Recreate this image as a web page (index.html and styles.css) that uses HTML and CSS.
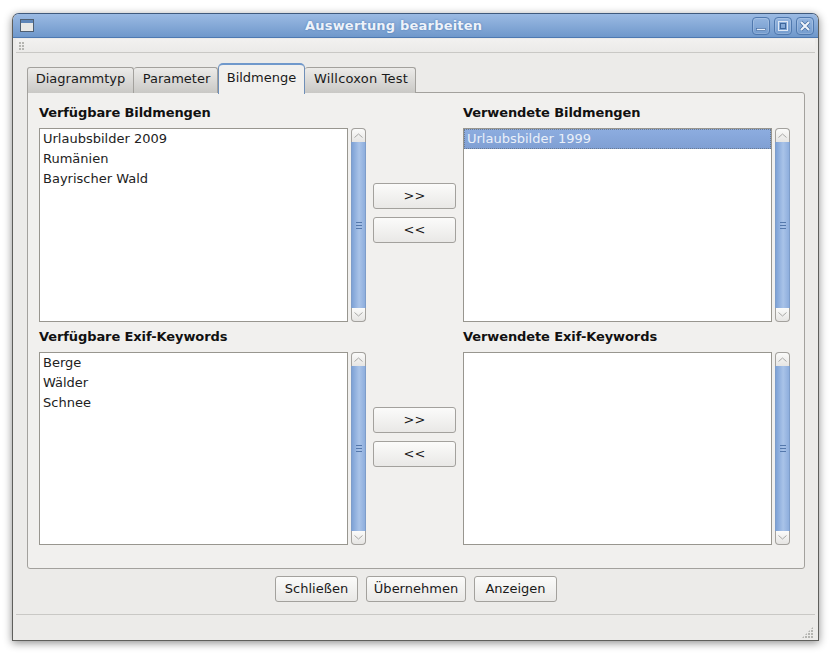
FILE: index.html
```html
<!DOCTYPE html>
<html lang="de">
<head>
<meta charset="utf-8">
<title>Auswertung bearbeiten</title>
<link rel="stylesheet" href="styles.css">
</head>
<body>
<div class="window">
  <header class="titlebar">
    <svg class="app-icon" width="15" height="15" viewBox="0 0 15 15"><rect x="0.5" y="0.5" width="13" height="12" fill="#e8e8e6" stroke="#4f5f72"/><rect x="1" y="1" width="12" height="3" fill="#5f86b8"/></svg>
    <span class="title">Auswertung bearbeiten</span>
    <div class="wm-buttons">
      <div class="wm-btn"><svg width="18" height="18" viewBox="0 0 18 18"><rect x="4.5" y="11.5" width="9" height="2" fill="#e6edf7" stroke="#3f679c" stroke-width=".6"/></svg></div>
      <div class="wm-btn"><svg width="18" height="18" viewBox="0 0 18 18"><rect x="4.5" y="4.5" width="9" height="9" fill="none" stroke="#dfe8f5" stroke-width="1"/><rect x="6.5" y="6.5" width="5" height="5" fill="none" stroke="#3f679c"/></svg></div>
      <div class="wm-btn"><svg width="18" height="18" viewBox="0 0 18 18"><path d="M5 5l8 8M13 5l-8 8" stroke="#3f679c" stroke-width="3.4" fill="none"/><path d="M5 5l8 8M13 5l-8 8" stroke="#eef3fa" stroke-width="2.2" fill="none"/></svg></div>
    </div>
  </header>
  <div class="toolbar"><span class="grip"></span></div>
  <main class="content">
    <nav class="tabs">
      <div class="tab t1">Diagrammtyp</div>
      <div class="tab t2">Parameter</div>
      <div class="tab tab-active">Bildmenge</div>
      <div class="tab t4">Willcoxon Test</div>
    </nav>
    <section class="pane">
      <div class="transfer">
        <div class="side">
          <h2 class="label">Verfügbare Bildmengen</h2>
          <div class="list-row">
            <ul class="list"><li>Urlaubsbilder 2009</li><li>Rumänien</li><li>Bayrischer Wald</li></ul>
            <div class="scrollbar"><div class="arrow up"><svg width="9" height="5" viewBox="0 0 9 5"><path d="M.5 4.5l4-3.5 4 3.5" fill="none" stroke="#a8a8a6"/></svg></div><div class="thumb"><span class="thumb-grip"></span></div><div class="arrow down"><svg width="9" height="5" viewBox="0 0 9 5"><path d="M.5 .5l4 3.5 4-3.5" fill="none" stroke="#a8a8a6"/></svg></div></div>
          </div>
        </div>
        <div class="moves"><button class="btn move">&gt;&gt;</button><button class="btn move">&lt;&lt;</button></div>
        <div class="side">
          <h2 class="label">Verwendete Bildmengen</h2>
          <div class="list-row">
            <ul class="list"><li class="selected">Urlaubsbilder 1999</li></ul>
            <div class="scrollbar"><div class="arrow up"><svg width="9" height="5" viewBox="0 0 9 5"><path d="M.5 4.5l4-3.5 4 3.5" fill="none" stroke="#a8a8a6"/></svg></div><div class="thumb"><span class="thumb-grip"></span></div><div class="arrow down"><svg width="9" height="5" viewBox="0 0 9 5"><path d="M.5 .5l4 3.5 4-3.5" fill="none" stroke="#a8a8a6"/></svg></div></div>
          </div>
        </div>
      </div>
      <div class="transfer">
        <div class="side">
          <h2 class="label">Verfügbare Exif-Keywords</h2>
          <div class="list-row">
            <ul class="list"><li>Berge</li><li>Wälder</li><li>Schnee</li></ul>
            <div class="scrollbar"><div class="arrow up"><svg width="9" height="5" viewBox="0 0 9 5"><path d="M.5 4.5l4-3.5 4 3.5" fill="none" stroke="#a8a8a6"/></svg></div><div class="thumb"><span class="thumb-grip"></span></div><div class="arrow down"><svg width="9" height="5" viewBox="0 0 9 5"><path d="M.5 .5l4 3.5 4-3.5" fill="none" stroke="#a8a8a6"/></svg></div></div>
          </div>
        </div>
        <div class="moves"><button class="btn move">&gt;&gt;</button><button class="btn move">&lt;&lt;</button></div>
        <div class="side">
          <h2 class="label">Verwendete Exif-Keywords</h2>
          <div class="list-row">
            <ul class="list"></ul>
            <div class="scrollbar"><div class="arrow up"><svg width="9" height="5" viewBox="0 0 9 5"><path d="M.5 4.5l4-3.5 4 3.5" fill="none" stroke="#a8a8a6"/></svg></div><div class="thumb"><span class="thumb-grip"></span></div><div class="arrow down"><svg width="9" height="5" viewBox="0 0 9 5"><path d="M.5 .5l4 3.5 4-3.5" fill="none" stroke="#a8a8a6"/></svg></div></div>
          </div>
        </div>
      </div>
    </section>
    <div class="actions">
      <button class="btn action a1">Schließen</button>
      <button class="btn action a2">Übernehmen</button>
      <button class="btn action a3">Anzeigen</button>
    </div>
  </main>
  <footer class="statusbar"><span class="size-grip"></span></footer>
</div>
</body>
</html>
```
FILE: styles.css
```css
* { box-sizing: border-box; }
html, body { margin: 0; padding: 0; background: #fff; }
body {
  width: 833px;
  height: 653px;
  padding: 13px 14px 0 12px;
  font-family: "DejaVu Sans", sans-serif;
  font-size: 13px;
  color: #1a1a1a;
  overflow: hidden;
}
.window {
  width: 807px;
  height: 628px;
  background: #ecebe9;
  border: 1px solid #5f5f5c;
  border-top-color: #3f5a7d;
  border-radius: 7px 7px 0 0;
  box-shadow: 0 2px 8px rgba(0,0,0,.45);
  display: flex;
  flex-direction: column;
}
.titlebar {
  height: 24px;
  flex: none;
  background: linear-gradient(#9bbae3, #6f98cb);
  border-bottom: 1px solid #4e79b1;
  border-radius: 6px 6px 0 0;
  display: flex;
  align-items: center;
  padding: 0 4px 0 7px;
  position: relative;
}
.app-icon { flex: none; margin-top: 1px; }
.title {
  position: absolute;
  left: 292px;
  top: 4px;
  font-weight: bold;
  font-size: 13px;
  line-height: 15px;
  letter-spacing: .2px;
  color: #eef3fa;
  text-shadow: 0 0 2px #4e79b1;
}
.wm-buttons { margin-left: auto; display: flex; gap: 4px; }
.wm-btn {
  width: 18px;
  height: 18px;
  border: 1px solid #4f78ae;
  border-radius: 4px;
  box-shadow: inset 0 0 0 1px rgba(255,255,255,.18);
  display: flex;
  align-items: center;
  justify-content: center;
}
.wm-btn svg { margin: -1px; flex: none; }
.toolbar {
  height: 14px;
  flex: none;
  margin: 1px 3px 0;
  background: linear-gradient(#f2f1f0, #ebeae8);
  border-bottom: 1px solid #c9c8c5;
  padding: 3px 0 0 3px;
}
.grip {
  display: block;
  width: 5px;
  height: 8px;
  background-image: radial-gradient(circle at 1px 1px, #b5b5b1 1px, transparent 1px);
  background-size: 3px 3px;
}
.content {
  flex: 1;
  padding: 13px 13px 0 14px;
  display: flex;
  flex-direction: column;
}
.tabs {
  display: flex;
  height: 27px;
  align-items: flex-end;
  margin-bottom: -1px;
  position: relative;
  z-index: 1;
}
.tab {
  height: 26px;
  padding-top: 3px;
  line-height: 15px;
  text-align: center;
  background: linear-gradient(#ecebe9, #c9c8c5);
  border: 1px solid #a3a19d;
  border-bottom: 0;
  border-left-width: 0;
  border-radius: 3px 3px 0 0;
  white-space: nowrap;
}
.t1 { width: 107px; border-left-width: 1px; }
.t2 { width: 84px; padding-left: 2px; }
.t4 { width: 111px; padding-left: 2px; letter-spacing: .2px; }
.tab-active {
  width: 87px;
  height: 31px;
  padding-top: 5px;
  background: #f1f0ee;
  border: 1px solid #6f8fb8;
  border-top: 2px solid #6f98cb;
  border-bottom: 0;
  border-radius: 5px 5px 0 0;
  margin-bottom: -1px;
}
.pane {
  height: 477px;
  background: #f1f0ee;
  border: 1px solid #a3a19d;
  border-radius: 0 3px 3px 3px;
  padding: 12px 14px 0 11px;
  display: flex;
  flex-direction: column;
  gap: 7px;
}
.transfer { display: flex; }
.transfer:first-child .list-row { height: 194px; }
.transfer:last-child .list-row { height: 193px; }
.side { width: 327px; flex: none; }
.label {
  margin: 0 0 7px;
  font-size: 13px;
  font-weight: bold;
  line-height: 16px;
  letter-spacing: -.1px;
  color: #111;
}
.list-row { display: flex; gap: 3px; }
.list {
  flex: 1;
  margin: 0;
  padding: 0;
  list-style: none;
  background: #fff;
  border: 1px solid #98968f;
}
.list li { height: 20px; line-height: 19px; padding: 0 3px; color: #222; }
.list .selected {
  background: linear-gradient(#8dade0, #7f9fd3);
  color: #eaf0f9;
  outline: 1px dotted #6a7a92;
  outline-offset: -1px;
}
.scrollbar {
  width: 15px;
  flex: none;
  display: flex;
  flex-direction: column;
}
.arrow {
  height: 14px;
  flex: none;
  background: linear-gradient(#fbfbfa, #e6e5e3);
  border: 1px solid #a3a19d;
  display: flex;
  align-items: center;
  justify-content: center;
}
.arrow.up { border-radius: 4px 4px 0 0; border-bottom: 0; }
.arrow.down { border-radius: 0 0 4px 4px; border-top: 0; }
.thumb {
  flex: 1;
  background: linear-gradient(90deg, #7ea2d6, #a9c3e8 55%, #8eaedd);
  border: 1px solid #7e9dc9;
  border-width: 0 1px;
  display: flex;
  align-items: center;
  justify-content: center;
}
.thumb-grip {
  width: 6px;
  height: 7px;
  background: repeating-linear-gradient(#5478ac 0 1px, transparent 1px 3px);
}
.moves {
  width: 83px;
  margin: 0 7px;
  flex: none;
  display: flex;
  flex-direction: column;
  gap: 8px;
  padding-top: 78px;
}
.btn {
  font: inherit;
  color: #1a1a1a;
  background: linear-gradient(#fbfbfa, #e9e8e6);
  border: 1px solid #a3a19d;
  border-radius: 3px;
  padding: 0 0 2px;
  height: 26px;
}
.move { width: 83px; }
.actions {
  display: flex;
  gap: 8px;
  padding: 7px 0 0 248px;
}
.a1 { width: 83px; }
.a2 { width: 100px; }
.a3 { width: 83px; }
.statusbar {
  margin: 12px 3px 0;
  height: 26px;
  border-top: 1px solid #c9c8c5;
  position: relative;
  flex: none;
}
.size-grip {
  position: absolute;
  right: 2px;
  bottom: 2px;
  width: 11px;
  height: 11px;
  background-image: radial-gradient(circle at 1px 1px, #b5b5b1 1px, transparent 1px);
  background-size: 3px 3px;
  clip-path: polygon(100% 0, 100% 100%, 0 100%);
}
```
